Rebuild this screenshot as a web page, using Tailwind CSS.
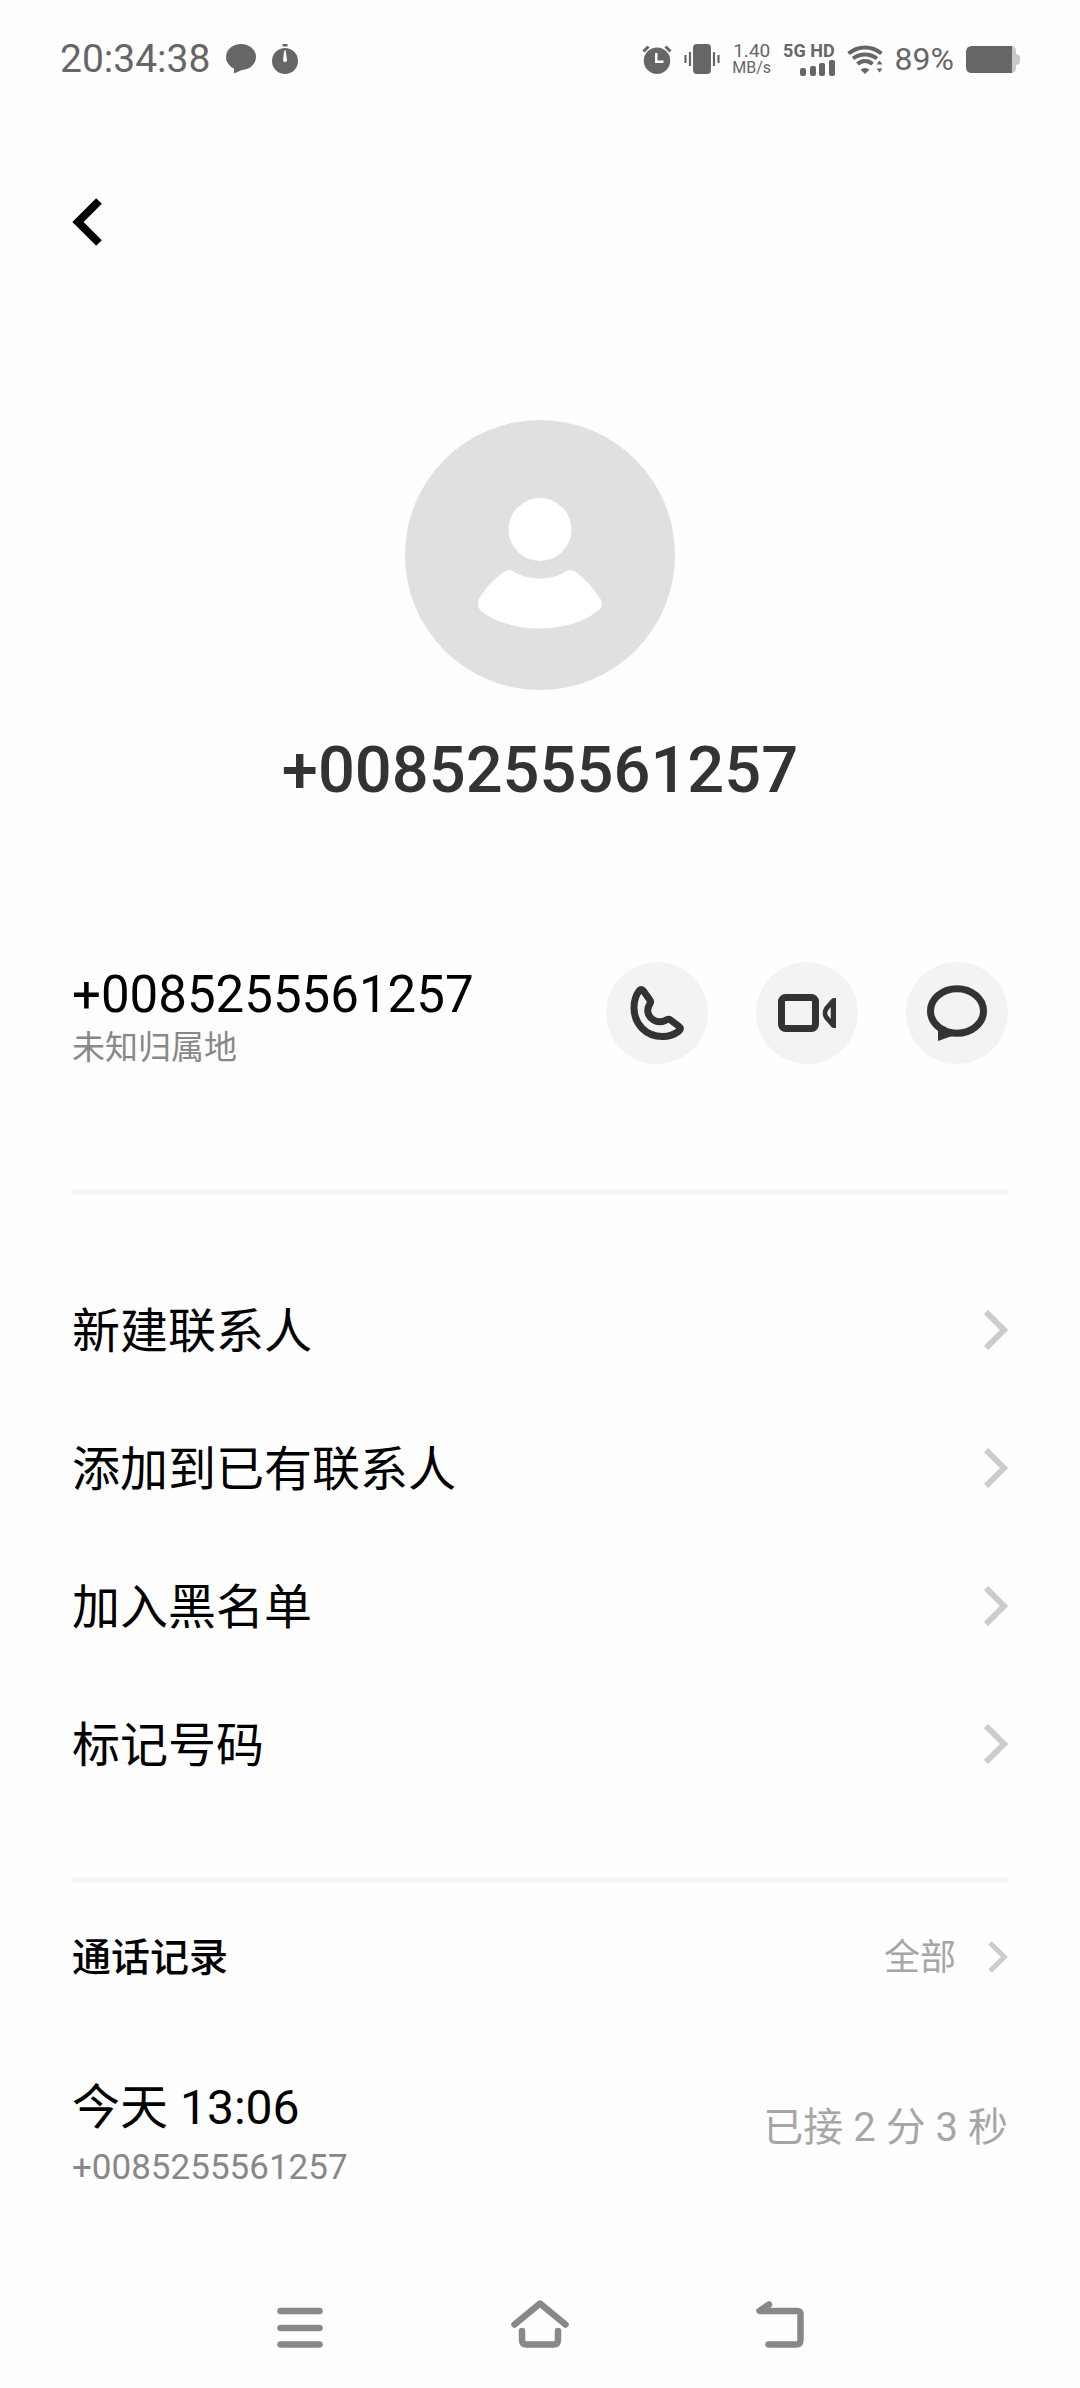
<!DOCTYPE html>
<html lang="zh-CN">
<head>
<meta charset="utf-8">
<meta name="viewport" content="width=device-width, initial-scale=1">
<title>联系人详情</title>
<script src="https://cdn.jsdelivr.net/npm/@tailwindcss/browser@4"></script>
</head>
<body class="flex min-h-screen flex-col bg-[#fefefe] font-['Roboto','Noto_Sans_CJK_SC',sans-serif] text-black">

<!-- Status bar -->
<div class="flex h-[118px] items-center justify-between px-[60px] text-[#666]">
  <div class="flex items-center gap-4">
    <time class="text-[39px] leading-10">20:34:38</time>
    <svg class="h-[30px] w-[30px]" viewBox="0 0 30 30" fill="currentColor"><ellipse cx="15" cy="13" rx="15" ry="13"/><path d="M8 21v8.500l9-4z"/></svg>
    <svg class="h-[30px] w-[26px]" viewBox="0 0 26 30" fill="currentColor"><path d="M10.500 0h5v2.500h-5z"/><path fill-rule="evenodd" d="M13 4a13 13 0 1 0 0 26a13 13 0 1 0 0-26zM12.300 6.500h1.400L15 16a2 2 0 1 1-4 0z"/></svg>
  </div>
  <div class="flex items-center gap-3">
    <svg class="h-[30px] w-[30px]" viewBox="0 0 30 30" fill="currentColor"><path fill-rule="evenodd" d="M15 3.500a13.200 13.200 0 1 0 0 26.400a13.200 13.200 0 1 0 0-26.400zM13 9h2.500v7.500h6V19H13z"/><path d="M1.500 7.500l5-5M28.500 7.500l-5-5" fill="none" stroke="currentColor" stroke-width="3"/></svg>
    <svg class="h-[30px] w-9" viewBox="0 0 36 30" fill="currentColor"><rect x="9" width="18" height="30" rx="4"/><path d="M1.500 11v8M6 8v14M30 8v14M34.500 11v8" stroke="currentColor" stroke-width="2.200"/></svg>
    <div class="flex flex-col items-center">
      <span class="text-[19px] leading-[17px]">1.40</span>
      <span class="text-base leading-[17px]">MB/s</span>
    </div>
    <div class="flex flex-col items-end gap-px">
      <span class="text-lg leading-[17px] font-bold">5G HD</span>
      <svg class="h-4 w-[35px]" viewBox="0 0 35 16" fill="currentColor"><rect y="8" width="6" height="8" rx="2"/><rect x="10" y="6" width="6" height="10" rx="2"/><rect x="19" y="3" width="6" height="13" rx="2"/><rect x="29" width="6" height="16" rx="2"/></svg>
    </div>
    <svg class="h-[30px] w-9" viewBox="0 0 36 30" fill="none" stroke="currentColor" stroke-width="4"><path d="M1.500 9.500Q9 3.500 18 3.500T34.500 9.500M6 14.500Q11.500 10.500 18 10.500T30 14.500M10.500 20Q14 17 18 17T25.500 20"/><path d="M13.500 25.500Q18 22.500 22.500 25.500L18 30zM29.500 20.500l3-4l3 4zM29.500 24.500l3 4l3-4z" fill="currentColor" stroke="none"/></svg>
    <span class="text-[32px] leading-10">89%</span>
    <svg class="h-[27px] w-[54px]" viewBox="0 0 54 27"><path d="M40 0h5q5 0 5 5v3h1q3 1 3 3v5q0 2-3 3h-1v3q0 5-5 5h-5z" fill="#c9c9c9"/><path d="M46 0H6Q0 0 0 6v15q0 6 6 6h40z" fill="currentColor"/></svg>
  </div>
</div>

<header class="flex h-52 items-center px-[72px]">
  <button type="button" aria-label="返回" class="flex">
    <svg class="h-12 w-[30px]" viewBox="0 0 30 48" fill="none" stroke="#000" stroke-width="8"><path d="M27 3L6 24l21 21"/></svg>
  </button>
</header>

<main class="flex flex-1 flex-col px-[72px]">
  <section class="flex flex-col items-center gap-10 pt-[94px]">
    <svg class="size-[270px]" viewBox="0 0 270 270" role="img" aria-label="头像"><circle cx="135" cy="135" r="135" fill="#e0e0e0"/><circle cx="135" cy="109.500" r="31.500" fill="#fff"/><path fill="#fff" d="M100 151.500Q104.500 148.500 108.500 151.500C116 156.500 126 158.500 135 158.500S153 156.500 160.500 151.500Q165 148.500 170 151.500C180 158.500 189 169 195.500 179Q199 184.500 194.500 189.500C180 202 157 208.500 134 208.500C112 208.500 91 202.500 76 191Q71 186 74 179C80 168.500 89 158.500 100 151.500z"/></svg>
    <h1 class="text-[65px] leading-20 font-medium text-[#333]">+0085255561257</h1>
  </section>

  <section class="mt-[152px] flex items-start justify-between border-b-4 border-[#f4f4f4] pb-[116px]">
    <div class="pt-1.5">
      <p class="text-[51px] leading-[54px]">+0085255561257</p>
      <p class="text-[33px] leading-[52px] text-[#888]">未知归属地</p>
    </div>
    <div class="flex gap-12">
      <button type="button" aria-label="拨打电话" class="size-[102px] rounded-full bg-[#f3f3f3]">
        <svg viewBox="0 0 102 102" fill="none" stroke="#333" stroke-width="7" stroke-linejoin="round"><path d="M33 29Q35 26 37.500 29L43.500 37.500Q45.500 39.500 43.500 42.500C40 48 42 55 47.500 58C51.500 60.500 55 60.500 59.500 58.300Q62.500 56.500 64.500 58L72.500 64Q76 66.500 73 69C68 73 62 74.500 56.500 74.500C40 74.500 28 62 28 45.500C28 39 30 33 33 29z"/></svg>
      </button>
      <button type="button" aria-label="视频通话" class="size-[102px] rounded-full bg-[#f3f3f3]">
        <svg viewBox="0 0 102 102"><rect x="25.500" y="35.500" width="34" height="31" rx="4" fill="none" stroke="#333" stroke-width="7"/><path fill="#333" fill-rule="evenodd" d="M80 36v30h-2q-1.500 0-2.500-1L68.500 57Q66.700 54 66.700 51T68.500 45L75.500 37Q76.500 36 78 36zM74.700 45L71.700 49Q71 51 71.700 53L74.700 57z"/></svg>
      </button>
      <button type="button" aria-label="发送信息" class="size-[102px] rounded-full bg-[#f3f3f3]">
        <svg viewBox="0 0 102 102"><ellipse cx="51" cy="49" rx="26.500" ry="22.300" fill="none" stroke="#333" stroke-width="7"/><path fill="#333" d="M32 63v16l14-5v-4l-6-.5V65z"/></svg>
      </button>
    </div>
  </section>

  <nav class="border-b-4 border-[#f4f4f4] pt-[67px] pb-[65px] text-5xl">
    <a href="#new" class="flex h-[138px] items-center justify-between"><span class="pt-1">新建联系人</span><svg class="h-10 w-6" viewBox="0 0 24 40" fill="none" stroke="#ccc" stroke-width="6"><path d="M2 2L20 20L2 38"/></svg></a>
    <a href="#add" class="flex h-[138px] items-center justify-between"><span class="pt-1">添加到已有联系人</span><svg class="h-10 w-6" viewBox="0 0 24 40" fill="none" stroke="#ccc" stroke-width="6"><path d="M2 2L20 20L2 38"/></svg></a>
    <a href="#block" class="flex h-[138px] items-center justify-between"><span class="pt-1">加入黑名单</span><svg class="h-10 w-6" viewBox="0 0 24 40" fill="none" stroke="#ccc" stroke-width="6"><path d="M2 2L20 20L2 38"/></svg></a>
    <a href="#mark" class="flex h-[138px] items-center justify-between"><span class="pt-1">标记号码</span><svg class="h-10 w-6" viewBox="0 0 24 40" fill="none" stroke="#ccc" stroke-width="6"><path d="M2 2L20 20L2 38"/></svg></a>
  </nav>

  <section>
    <div class="flex h-[150px] items-center justify-between">
      <h2 class="pt-0.5 text-[39px] font-medium">通话记录</h2>
      <a href="#calls" class="flex items-center gap-8 text-4xl text-[#a6a6a6]"><span class="pt-0.5">全部</span><svg class="h-8 w-5" viewBox="0 0 20 32" fill="none" stroke="#ccc" stroke-width="5"><path d="M2 2L16.500 16L2 30"/></svg></a>
    </div>
    <div class="flex items-center justify-between pt-11">
      <div>
        <p class="text-5xl leading-16">今天 <time>13:06</time></p>
        <p class="text-[35px] leading-14 text-[#888]">+0085255561257</p>
      </div>
      <p class="pb-4 text-[40px] text-[#a6a6a6]">已接 2 分 3 秒</p>
    </div>
  </section>
</main>

<footer class="grid grid-cols-3 justify-items-center px-[180px] pt-15 pb-10 text-[#888]">
  <button type="button" aria-label="最近任务"><svg class="h-12 w-[46px]" viewBox="0 0 46 48" fill="none" stroke="currentColor" stroke-width="6.500" stroke-linecap="round"><path d="M3.500 11h39M3.500 28h39M3.500 44.500h39"/></svg></button>
  <button type="button" aria-label="主屏幕"><svg class="h-12 w-[58px]" viewBox="0 0 58 48" fill="none" stroke="currentColor" stroke-width="6.500" stroke-linecap="round" stroke-linejoin="round"><path d="M3.500 24.500L29 3.500L54.500 24.500M11 31v9q0 4.500 4.500 4.500h27q4.500 0 4.500-4.500v-9"/></svg></button>
  <button type="button" aria-label="返回上一页"><svg class="h-12 w-12" viewBox="0 0 48 48" fill="none" stroke="currentColor" stroke-width="6.500" stroke-linecap="round" stroke-linejoin="round"><path d="M13 4.500L3.500 11H41q3.500 0 3.500 3.500V40q0 4.500-4.500 4.500H12.500"/></svg></button>
</footer>
</body>
</html>
